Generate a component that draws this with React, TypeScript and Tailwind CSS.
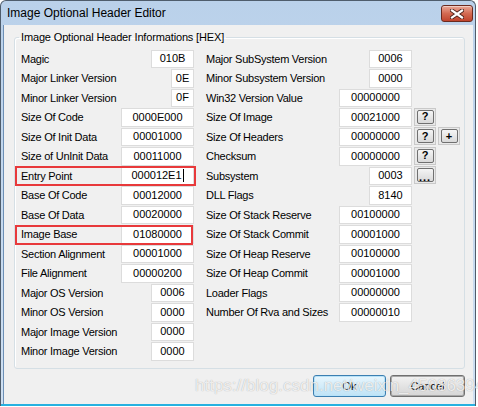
import React from "react";

type Field = {
  label: string;
  value: string;
  width: number;
  marked?: "entry" | "base";
  caret?: boolean;
  buttons?: string[];
};

const leftFields: Field[] = [
  { label: "Magic", value: "010B", width: 43 },
  { label: "Major Linker Version", value: "0E", width: 23 },
  { label: "Minor Linker Version", value: "0F", width: 23 },
  { label: "Size Of Code", value: "0000E000", width: 73 },
  { label: "Size Of Init Data", value: "00001000", width: 73 },
  { label: "Size of UnInit Data", value: "00011000", width: 73 },
  { label: "Entry Point", value: "000012E1", width: 73, marked: "entry", caret: true },
  { label: "Base Of Code", value: "00012000", width: 73 },
  { label: "Base Of Data", value: "00020000", width: 73 },
  { label: "Image Base", value: "01080000", width: 73, marked: "base" },
  { label: "Section Alignment", value: "00001000", width: 73 },
  { label: "File Alignment", value: "00000200", width: 73 },
  { label: "Major OS Version", value: "0006", width: 43 },
  { label: "Minor OS Version", value: "0000", width: 43 },
  { label: "Major Image Version", value: "0000", width: 43 },
  { label: "Minor Image Version", value: "0000", width: 43 },
];

const rightFields: Field[] = [
  { label: "Major SubSystem Version", value: "0006", width: 43 },
  { label: "Minor Subsystem Version", value: "0000", width: 43 },
  { label: "Win32 Version Value", value: "00000000", width: 73 },
  { label: "Size Of Image", value: "00021000", width: 73, buttons: ["?"] },
  { label: "Size Of Headers", value: "00000000", width: 73, buttons: ["?", "+"] },
  { label: "Checksum", value: "00000000", width: 73, buttons: ["?"] },
  { label: "Subsystem", value: "0003", width: 43, buttons: ["..."] },
  { label: "DLL Flags", value: "8140", width: 43 },
  { label: "Size Of Stack Reserve", value: "00100000", width: 73 },
  { label: "Size Of Stack Commit", value: "00001000", width: 73 },
  { label: "Size Of Heap Reserve", value: "00100000", width: 73 },
  { label: "Size Of Heap Commit", value: "00001000", width: 73 },
  { label: "Loader Flags", value: "00000000", width: 73 },
  { label: "Number Of Rva and Sizes", value: "00000010", width: 73 },
];

function ValueBox({ field }: { field: Field }) {
  return (
    <div
      className="flex h-[18.5px] items-center justify-center border border-[#dcdcdc] bg-white text-[11px] leading-none"
      style={{ width: field.width }}
    >
      <span>{field.value}</span>
      {field.caret && <span className="ml-[1px] h-[13px] w-px bg-black" />}
    </div>
  );
}

function SmallButton({ text }: { text: string }) {
  return (
    <div className="flex h-[18px] w-[22px] items-center justify-center border border-[#c9c9c9] bg-[#e9e9e9]">
      <div className="flex h-[14px] w-[17px] items-center justify-center rounded-[2px] border border-[#707070] bg-gradient-to-b from-[#f5f5f5] to-[#d9d9d9] text-[11px] font-bold leading-none">
        {text === "..." ? <span className="mt-[5px] tracking-[1px]">...</span> : text}
      </div>
    </div>
  );
}

function Row({ field }: { field: Field }) {
  return (
    <div className="relative flex h-[19.5px] items-center">
      <span className="flex-1 whitespace-nowrap tracking-[-0.25px]">{field.label}</span>
      <ValueBox field={field} />
      {field.marked === "entry" && (
        <div className="pointer-events-none absolute top-0 -bottom-[0.5px] -left-[6px] -right-[2px] border-2 border-[#e8393b]" />
      )}
      {field.marked === "base" && (
        <div className="pointer-events-none absolute top-0 -bottom-[1px] -left-[6px] right-[1px] border-2 border-[#e8393b]" />
      )}
    </div>
  );
}

function CloseButton() {
  return (
    <div className="mt-[4px] flex h-[17px] w-[32px] items-center justify-center rounded-[3px] border border-[#6b2a1f] bg-gradient-to-b from-[#e9a898] via-[#d36a52] to-[#c0432c] shadow-[inset_0_1px_0_rgba(255,255,255,0.45)]">
      <svg width="14" height="10" viewBox="0 0 14 10">
        <path d="M2 1.5 L12 8.5 M12 1.5 L2 8.5" stroke="#4b2019" strokeWidth="4" strokeLinecap="square" />
        <path d="M2 1.5 L12 8.5 M12 1.5 L2 8.5" stroke="#ffffff" strokeWidth="2.2" strokeLinecap="square" />
      </svg>
    </div>
  );
}

export default function App() {
  return (
    <div className="relative h-[407px] w-[478px] overflow-hidden bg-white font-['Liberation_Sans',Arial,sans-serif] text-[11px] text-black">
      <div className="flex h-[406px] w-[476px] flex-col rounded-t-[6px] border border-b-0 border-[#4f5d6c] bg-gradient-to-b from-[#bad1ea] to-[#cfe0f2]">
        {/* Title bar */}
        <div className="flex h-[24px] shrink-0 items-start pl-[6px] pr-[2px]">
          <span className="mt-[5px] text-[12px] leading-[14px]">Image Optional Header Editor</span>
          <div className="ml-auto">
            <CloseButton />
          </div>
        </div>

        {/* Client area */}
        <div className="mx-[2px] flex-1 border-l border-[#6d8fb5] bg-[#f0f0f0]">
          <fieldset className="ml-[10px] mt-[5px] w-[451px] rounded-[3px] border border-[#d5dfe5] pl-[6px] pt-[5px] pb-[7px] shadow-[inset_1px_1px_0_#ffffff]">
            <legend className="-ml-[2px] px-[2px] leading-[14px] tracking-[-0.15px]">
              Image Optional Header Informations [HEX]
            </legend>
            <div className="flex gap-[12px]">
              <div className="flex w-[173px] flex-col">
                {leftFields.map((f) => (
                  <Row key={f.label} field={f} />
                ))}
              </div>
              <div className="flex flex-col">
                {rightFields.map((f) => (
                  <div key={f.label} className="flex items-start">
                    <div className="w-[206px]">
                      <Row field={f} />
                    </div>
                    {f.buttons && (
                      <div className="ml-[2px] flex gap-[2px]">
                        {f.buttons.map((b) => (
                          <SmallButton key={b} text={b} />
                        ))}
                      </div>
                    )}
                  </div>
                ))}
              </div>
            </div>
          </fieldset>

          <div className="ml-[10px] mt-[6px] flex w-[451px] justify-end gap-[4px]">
            <button className="h-[22px] w-[73px] rounded-[3px] border border-[#3c7fb1] bg-gradient-to-b from-[#e8f6fd] to-[#bfe3f6] text-[11px] shadow-[inset_0_0_0_1px_#b8e2f8]">
              Ok
            </button>
            <button className="h-[22px] w-[75px] rounded-[3px] border border-[#707070] bg-gradient-to-b from-[#f2f2f2] to-[#d5d5d5] text-[11px] shadow-[inset_0_0_0_1px_#a8a8a8]">
              Cancel
            </button>
          </div>
        </div>
        <div className="h-[2px] shrink-0 bg-[#27b1e0]" />
      </div>

      {/* blog watermark */}
      <div className="pointer-events-none absolute left-[195px] top-[376px] whitespace-nowrap text-[17px] leading-[20px] text-white/80 [text-shadow:0_0_1px_rgba(0,0,0,0.35)]">
        https://blog.csdn.net/weixin_45086394
      </div>
    </div>
  );
}
